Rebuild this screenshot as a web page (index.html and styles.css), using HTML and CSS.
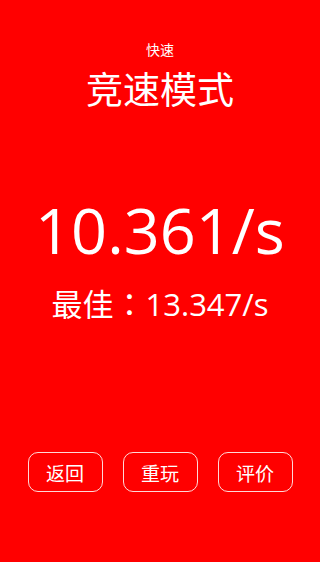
FILE: index.html
```html
<!DOCTYPE html>
<html lang="zh">
<head>
<meta charset="utf-8">
<link rel="stylesheet" href="styles.css">
</head>
<body>
<main class="screen">
  <header class="head">
    <div class="sub">快速</div>
    <h1 class="title">竞速模式</h1>
  </header>
  <section class="result">
    <div class="score">10.361/s</div>
    <div class="best">最佳<span class="colon">：</span>13.347/s</div>
  </section>
  <nav class="actions">
    <button class="btn">返回</button>
    <button class="btn">重玩</button>
    <button class="btn">评价</button>
  </nav>
</main>
</body>
</html>
```
FILE: styles.css
```css
html, body {
  margin: 0;
  padding: 0;
  height: 100%;
}
body {
  background: #ff0000;
  color: #ffffff;
  font-family: "Open Sans", "Noto Sans CJK SC", sans-serif;
}
.screen {
  height: 562px;
  display: flex;
  flex-direction: column;
  align-items: center;
}
.head {
  display: flex;
  flex-direction: column;
  align-items: center;
  padding-top: 42px;
}
.sub {
  font-family: "Noto Sans CJK SC", sans-serif;
  font-size: 14px;
  line-height: 14px;
}
.title {
  margin: 14px 0 0;
  font-family: "Noto Sans CJK SC", sans-serif;
  font-weight: 400;
  font-size: 37px;
  line-height: 37px;
}
.result {
  display: flex;
  flex-direction: column;
  align-items: center;
  margin-top: 91px;
}
.score {
  font-size: 63px;
  line-height: 63px;
}
.best {
  margin-top: 26px;
  font-size: 31px;
  line-height: 31px;
  font-family: "Open Sans", "Noto Sans CJK SC", sans-serif;
}
.colon {
  font-family: "Noto Sans CJK TC", sans-serif;
  display: inline-block;
  width: 32px;
  text-align: center;
}
.actions {
  margin-top: auto;
  margin-bottom: 70px;
  display: flex;
  gap: 20px;
}
.btn {
  width: 75px;
  height: 40px;
  box-sizing: border-box;
  border: 1px solid rgba(255, 255, 255, 0.85);
  border-radius: 10px;
  background: transparent;
  color: #ffffff;
  font-family: "Noto Sans CJK SC", sans-serif;
  font-size: 19px;
  padding: 0;
}
```
